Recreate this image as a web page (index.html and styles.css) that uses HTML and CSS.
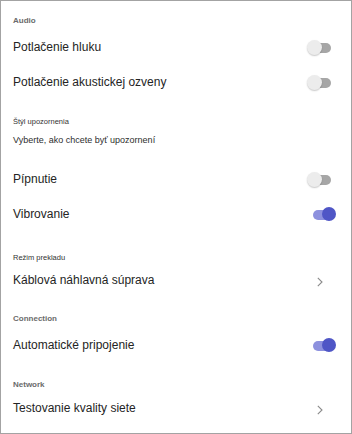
FILE: index.html
```html
<!DOCTYPE html>
<html lang="sk">
<head>
    <meta charset="UTF-8">
    <meta name="viewport" content="width=device-width, initial-scale=1.0">
    <title>Nastavenia</title>
    <link rel="stylesheet" href="styles.css">
</head>
<body>
    <div class="panel">
        <div class="group-head head-audio">Audio</div>
        <div class="row">
            <span class="label">Potlačenie hluku</span>
            <span class="toggle"><span class="track"></span><span class="knob"></span></span>
        </div>
        <div class="row">
            <span class="label">Potlačenie akustickej ozveny</span>
            <span class="toggle"><span class="track"></span><span class="knob"></span></span>
        </div>

        <div class="sub-head head-style">Štýl upozornenia</div>
        <div class="hint">Vyberte, ako chcete byť upozornení</div>
        <div class="row row-first">
            <span class="label">Pípnutie</span>
            <span class="toggle"><span class="track"></span><span class="knob"></span></span>
        </div>
        <div class="row">
            <span class="label">Vibrovanie</span>
            <span class="toggle on"><span class="track"></span><span class="knob"></span></span>
        </div>

        <div class="sub-head head-mode">Režim prekladu</div>
        <div class="row row-link">
            <span class="label">Káblová náhlavná súprava</span>
            <svg class="chevron" width="6" height="10" viewBox="0 0 6 10"><polyline points="0.8,0.8 5,5 0.8,9.2" fill="none" stroke="#8a8a8a" stroke-width="1.1"/></svg>
        </div>

        <div class="group-head head-conn">Connection</div>
        <div class="row">
            <span class="label">Automatické pripojenie</span>
            <span class="toggle on"><span class="track"></span><span class="knob"></span></span>
        </div>

        <div class="group-head head-conn">Network</div>
        <div class="row row-link row-last">
            <span class="label">Testovanie kvality siete</span>
            <svg class="chevron" width="6" height="10" viewBox="0 0 6 10"><polyline points="0.8,0.8 5,5 0.8,9.2" fill="none" stroke="#8a8a8a" stroke-width="1.1"/></svg>
        </div>
    </div>
</body>
</html>
```

FILE: styles.css
```css
html, body {
    margin: 0;
    padding: 0;
}
body {
    font-family: "Liberation Sans", Arial, sans-serif;
    background-color: #ffffff;
    color: #242424;
}
.panel {
    box-sizing: border-box;
    height: 100vh;
    border: 1px solid #a3a3a3;
    display: flex;
    flex-direction: column;
}
.group-head {
    padding-left: 12px;
    height: 16px;
    line-height: 16px;
    font-size: 8px;
    font-weight: bold;
    color: #6b6b6b;
}
.head-audio {
    margin-top: 11px;
    height: 17px;
    line-height: 17px;
}
.head-conn {
    margin-top: 15px;
}
.sub-head {
    padding-left: 12px;
    font-size: 7.5px;
    color: #333;
    height: 14px;
    line-height: 14px;
}
.head-style {
    margin-top: 16px;
}
.head-mode {
    margin-top: 21px;
    height: 12px;
    line-height: 12px;
}
.hint {
    margin-top: 4px;
    padding-left: 12px;
    font-size: 9px;
    color: #2e2e2e;
    height: 14px;
    line-height: 14px;
}
.row {
    display: flex;
    align-items: center;
    justify-content: space-between;
    height: 35px;
    padding: 0 15px 0 12px;
}
.row-first {
    margin-top: 14px;
}
.row-link {
    height: 32px;
    padding-right: 28px;
}
.row-last {
    height: 30px;
}
.label {
    font-size: 12px;
}
.toggle {
    position: relative;
    width: 29px;
    height: 15px;
    margin-top: 1px;
}
.track {
    position: absolute;
    left: 6px;
    top: 3px;
    width: 18px;
    height: 10px;
    border-radius: 5px;
    background-color: #a6a6a6;
}
.knob {
    position: absolute;
    left: 0;
    top: 0;
    width: 15px;
    height: 15px;
    border-radius: 50%;
    background-color: #ececec;
    box-shadow: 0 1px 1.5px rgba(0, 0, 0, 0.22);
}
.toggle.on .track {
    background-color: #8d91de;
}
.toggle.on .knob {
    left: 15px;
    width: 14px;
    height: 14px;
    background-color: #4f56c6;
    box-shadow: none;
}
.chevron {
    display: block;
    margin-top: 3px;
}
```
